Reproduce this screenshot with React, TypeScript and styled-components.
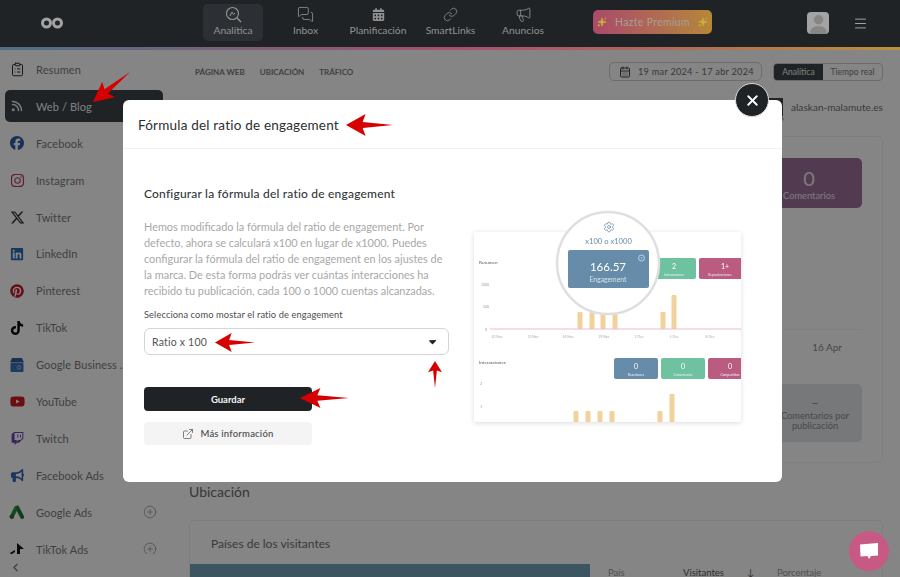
import React from "react";
import styled, { createGlobalStyle } from "styled-components";
import {
  CalendarDays,
  ChevronLeft,
  CirclePlus,
  ClipboardList,
  ExternalLink,
  Link as LinkIcon,
  Megaphone,
  Menu,
  MessagesSquare,
  Settings,
  Sparkles,
  X,
} from "lucide-react";
import {
  FaBullhorn,
  FaCalendarDays,
  FaCaretDown,
  FaFacebook,
  FaInstagram,
  FaLinkedin,
  FaPinterest,
  FaRss,
  FaTiktok,
  FaTwitch,
  FaUser,
  FaXTwitter,
  FaYoutube,
} from "react-icons/fa6";

const Global = createGlobalStyle`
  html, body { margin: 0; padding: 0; height: 100%; background: #fff; overflow: hidden; }
  * { box-sizing: border-box; }
  body { font-family: "Lato", "Noto Sans", sans-serif; color: #333; }
`;

const Page = styled.div`
  width: 900px;
  height: 577px;
  display: flex;
  flex-direction: column;
  overflow: hidden;
`;

const Header = styled.header`
  position: relative;
  z-index: 3;
  flex: 0 0 50px;
  display: flex;
  background: #1f2326;
  border-bottom: 3px solid;
  border-image: linear-gradient(90deg, #4c7086 0%, #a5506f 50%, #b06a5a 75%, #b8923c 100%) 1;
`;

const LogoBox = styled.div`
  width: 203px;
  padding: 13px 0 0 40px;
  color: #a3a3a3;
`;

const Nav = styled.nav`
  display: flex;
  gap: 12.5px;
  padding-top: 4px;
`;

const NavItem = styled.div<{ $active?: boolean }>`
  width: 60px;
  height: 37px;
  border-radius: 5px;
  background: ${(p) => (p.$active ? "#2c3034" : "transparent")};
  display: flex;
  flex-direction: column;
  align-items: center;
  padding-top: 2px;
  color: #929292;
  font-size: 10.3px;
  line-height: 14px;
  white-space: nowrap;
`;

const NavIcon = styled.span`
  height: 17px;
  display: flex;
  align-items: center;
`;

const Premium = styled.div`
  margin: 10px 0 0 40px;
  width: 119px;
  height: 24px;
  border-radius: 5px;
  background: linear-gradient(90deg, #aa4a6b, #b5873a);
  color: #a79c95;
  font-size: 10.5px;
  font-weight: 500;
  letter-spacing: 0.3px;
  white-space: nowrap;
  display: flex;
  align-items: center;
  justify-content: center;
  gap: 8px;
`;

const Spark = styled.span`
  color: #cdb03a;
  display: flex;
`;

const Avatar = styled.div`
  margin: 12px 0 0 95px;
  width: 22px;
  height: 22px;
  border-radius: 4px;
  background: #a3a3a3;
  color: #868686;
  overflow: hidden;
  display: flex;
  justify-content: center;
  align-items: flex-end;
`;

const Burger = styled.div`
  margin: 15px 0 0 24px;
  color: #a0a0a0;
`;

const Body = styled.div`
  flex: 1;
  display: flex;
  min-height: 0;
`;

const Sidebar = styled.aside`
  flex: 0 0 170px;
  display: flex;
  flex-direction: column;
`;

const SideList = styled.div`
  flex: 1;
  min-height: 0;
  overflow: hidden;
  padding-top: 3.5px;
`;

const SideRow = styled.div<{ $active?: boolean }>`
  position: relative;
  height: 32px;
  width: 158px;
  margin: 0 0 4.9px 5px;
  padding-left: 4px;
  border-radius: 5px;
  display: flex;
  align-items: center;
  gap: 11px;
  font-size: 11px;
  letter-spacing: 0.1px;
  color: ${(p) => (p.$active ? "#f2f2f2" : "#7b7b7b")};
  background: ${(p) => (p.$active ? "#3d4449" : "transparent")};
  white-space: nowrap;
`;

const SideIcon = styled.span<{ $color?: string }>`
  width: 16px;
  display: flex;
  justify-content: center;
  color: ${(p) => p.$color || "inherit"};
`;

const SidePlus = styled.span`
  position: absolute;
  right: 6px;
  top: 9px;
  color: #8d8d8d;
  display: flex;
`;

const SideFoot = styled.div`
  flex: 0 0 22px;
  padding: 4px 0 0 9px;
  color: #707070;
`;

const Main = styled.main`
  flex: 1;
  min-width: 0;
  overflow: hidden;
  padding: 12px 17px 0 5px;
`;

const TopBar = styled.div`
  display: flex;
  align-items: center;
  height: 19px;
`;

const Tabs = styled.div`
  display: flex;
  gap: 15px;
  padding-left: 20px;
  flex: 1;
  font-size: 8px;
  font-weight: 700;
  color: #7c7c7c;
  white-space: nowrap;
`;

const DateBox = styled.div`
  width: 153px;
  height: 19px;
  margin-right: 11px;
  border: 1px solid #d0d0d0;
  border-radius: 5px;
  display: flex;
  align-items: center;
  gap: 7px;
  padding-left: 9px;
  font-size: 9.2px;
  letter-spacing: 0.25px;
  white-space: nowrap;
  color: #6c6c6c;
`;

const Toggle = styled.div`
  width: 110px;
  height: 18px;
  border: 1px solid #d0d0d0;
  border-radius: 4px;
  overflow: hidden;
  display: flex;
  font-size: 8.5px;
  color: #7a7a7a;
`;

const ToggleItem = styled.span<{ $on?: boolean }>`
  flex: ${(p) => (p.$on ? "0 0 49px" : "1")};
  display: flex;
  align-items: center;
  justify-content: center;
  background: ${(p) => (p.$on ? "#3d4449" : "transparent")};
  color: ${(p) => (p.$on ? "#f0f0f0" : "#7a7a7a")};
`;

const SiteRow = styled.div`
  margin-top: 17px;
  height: 18px;
  display: flex;
  justify-content: flex-end;
  align-items: center;
  gap: 8px;
  font-size: 10px;
  letter-spacing: 0.05px;
  color: #6f6f6f;
`;

const Favicon = styled.span`
  position: relative;
  width: 19px;
  height: 18px;
  background: #444;
`;

const FavBadge = styled.span`
  position: absolute;
  right: -1px;
  bottom: -5px;
  color: #3f8a86;
  font-size: 7px;
  display: flex;
`;

const Card = styled.section`
  margin: 20px 0 0 14px;
  border: 1px solid #f1f1f1;
  border-radius: 6px;
  padding: 21px 20px 20px;
`;

const Tile = styled.div<{ $bg: string; $fg: string; $h: number; $w: number }>`
  width: ${(p) => p.$w}px;
  height: ${(p) => p.$h}px;
  margin-left: auto;
  border-radius: 5px;
  background: ${(p) => p.$bg};
  color: ${(p) => p.$fg};
  display: flex;
  flex-direction: column;
  align-items: center;
  justify-content: center;
  text-align: center;
  font-size: 9.3px;
  line-height: 10px;
`;

const TileValue = styled.div<{ $size: number }>`
  font-size: ${(p) => p.$size}px;
  line-height: 1.25;
`;

const ChartStub = styled.div`
  height: 122px;
  border-bottom: 1px solid #f3f3f3;
`;

const AxisDate = styled.div`
  height: 54px;
  padding-top: 11px;
  text-align: right;
  padding-right: 20px;
  font-size: 10px;
  color: #8a8a8a;
`;

const Section = styled.h2`
  margin: 20px 0 0 14px;
  font-size: 14px;
  line-height: 18px;
  font-weight: 400;
  color: #6b6b6b;
`;

const Card2 = styled.section`
  margin: 19px 0 0 14px;
  border: 1px solid #f1f1f1;
  border-radius: 6px;
  height: 100px;
`;

const Card2Title = styled.div`
  padding: 15px 0 0 21px;
  height: 43px;
  font-size: 12px;
  color: #6f6f6f;
`;

const Card2Row = styled.div`
  display: flex;
`;

const MapBlock = styled.div`
  width: 400px;
  height: 60px;
  background: #73a3b9;
`;

const TableHead = styled.div`
  display: flex;
  padding: 3px 0 0 18px;
  font-size: 9.5px;
  line-height: 12px;
`;

const HeadCell = styled.span<{ $w: number; $dark?: boolean }>`
  width: ${(p) => p.$w}px;
  color: ${(p) => (p.$dark ? "#606060" : "#9a9a9a")};
`;

const Overlay = styled.div`
  position: fixed;
  inset: 0;
  z-index: 2;
  background: rgba(0, 0, 0, 0.48);
  padding: 100px 118px 0 123px;
`;

const Modal = styled.div`
  position: relative;
  width: 659px;
  height: 382px;
  background: #fff;
  border-radius: 6px;
`;

const ModalHead = styled.div`
  height: 49px;
  border-bottom: 1px solid #eef1f1;
  padding: 16px 0 0 15px;
  font-size: 13.5px;
  line-height: 18px;
  letter-spacing: 0.2px;
  color: #2b2f32;
`;

const Close = styled.div`
  position: absolute;
  top: -17px;
  right: 13px;
  width: 34px;
  height: 34px;
  border-radius: 50%;
  background: #1f2326;
  border: 1px solid #d9d9d9;
  color: #fff;
  display: flex;
  align-items: center;
  justify-content: center;
`;

const ModalBody = styled.div`
  display: flex;
  padding-left: 21px;
  gap: 16px;
`;

const FormCol = styled.div`
  width: 305px;
  padding-top: 36px;
`;

const FormTitle = styled.h3`
  margin: 0;
  font-size: 12px;
  line-height: 18px;
  font-weight: 500;
  letter-spacing: 0.2px;
  color: #33373a;
`;

const Lead = styled.p`
  margin: 16px 0 0;
  font-size: 10.9px;
  line-height: 16px;
  white-space: nowrap;
  color: #a8a8a8;
`;

const FieldLabel = styled.div`
  margin-top: 9px;
  font-size: 9.3px;
  line-height: 14px;
  letter-spacing: 0.1px;
  color: #4d4d4d;
`;

const Select = styled.div`
  margin-top: 6px;
  height: 27px;
  border: 1px solid #d5d5d5;
  border-radius: 6px;
  padding: 0 10px 0 7px;
  display: flex;
  align-items: center;
  justify-content: space-between;
  font-size: 10.5px;
  letter-spacing: 0.2px;
  color: #555;
`;

const Guardar = styled.button`
  display: block;
  margin-top: 32px;
  width: 168px;
  height: 24px;
  border: 0;
  border-radius: 4px;
  background: #1f2326;
  color: #f4f4f4;
  font: 700 9.5px "Lato", sans-serif;
`;

const MoreInfo = styled.button`
  margin-top: 11px;
  width: 168px;
  height: 23px;
  border: 0;
  border-radius: 4px;
  background: #f4f4f4;
  color: #555;
  font: 600 9.5px "Lato", sans-serif;
  letter-spacing: 0.2px;
  display: flex;
  align-items: center;
  justify-content: center;
  gap: 6px;
`;

const PreviewCol = styled.div`
  padding-top: 56px;
`;

const PreviewSvg = styled.svg`
  display: block;
  font-family: "Lato", sans-serif;
  filter: blur(0.3px);
`;

const Chat = styled.div`
  position: fixed;
  z-index: 3;
  left: 849px;
  top: 531px;
  width: 40px;
  height: 40px;
  border-radius: 50%;
  background: #c75a85;
  display: flex;
  align-items: center;
  justify-content: center;
`;

const Pointer = styled.svg<{ $x: number; $y: number; $rot: number; $len: number; $h: number }>`
  position: fixed;
  z-index: 4;
  left: ${(p) => p.$x}px;
  top: ${(p) => p.$y - p.$h / 2}px;
  width: ${(p) => p.$len}px;
  height: ${(p) => p.$h}px;
  transform: rotate(${(p) => p.$rot}deg);
  transform-origin: 0 50%;
`;

const RedArrow = (p: { x: number; y: number; rot: number; len: number; h: number }) => (
  <Pointer $x={p.x} $y={p.y} $rot={p.rot} $len={p.len} $h={p.h} viewBox="0 0 48 22" preserveAspectRatio="none">
    <polygon points="0,11 20,0 17,8 48,11 17,14 20,22" fill="#d60000" />
  </Pointer>
);

const GoogleBusinessIcon = () => (
  <svg width="14" height="14" viewBox="0 0 14 14">
    <path d="M2 0h10l2 4.500H0z" fill="#2f5f9e" />
    <rect x="0.5" y="5" width="13" height="9" rx="1" fill="#3a74bd" />
    <circle cx="9" cy="9.5" r="1.7" fill="none" stroke="#a9c1df" strokeWidth="0.9" />
  </svg>
);

const GoogleAdsIcon = () => (
  <svg width="16" height="14" viewBox="0 0 16 14">
    <path d="M5.600 1.600 9.200.2 15 11.200a2 2 0 0 1-3.400 2z" fill="#1f7a3a" />
    <path d="M5.600 1.600 8 5.600l-3.800 7.600A2 2 0 0 1 1 11z" fill="#2a8a45" />
    <circle cx="2.800" cy="11.600" r="2.200" fill="#1e6f35" />
  </svg>
);

const TikTokAdsIcon = () => (
  <svg width="15" height="14" viewBox="0 0 15 14">
    <path d="M7 1 14 7H10v6H7z" fill="#111" />
    <path d="M0 11 5 8v2L1 12.500z" fill="#111" />
  </svg>
);

const AnaliticaIcon = () => (
  <svg width="17" height="17" viewBox="0 0 17 17" fill="none" stroke="currentColor" strokeWidth="1.1">
    <circle cx="7.5" cy="7.5" r="6" />
    <path d="M12 12l4 4" strokeWidth="1.5" />
    <path d="M5 10l2-4 1.500 2.500L10 7" strokeWidth="1" />
  </svg>
);

const LogoIcon = () => (
  <svg width="24" height="12" viewBox="0 0 24 12" fill="none" stroke="currentColor" strokeWidth="3">
    <circle cx="6.500" cy="6" r="4" />
    <circle cx="17.500" cy="6" r="4" />
  </svg>
);

const navItems = [
  { label: "Analítica", icon: <AnaliticaIcon />, active: true },
  { label: "Inbox", icon: <MessagesSquare size={17} strokeWidth={1.2} /> },
  { label: "Planificación", icon: <FaCalendarDays size={13} /> },
  { label: "SmartLinks", icon: <LinkIcon size={15} strokeWidth={1.3} /> },
  { label: "Anuncios", icon: <Megaphone size={17} strokeWidth={1.2} /> },
];

const sideItems: {
  label: string;
  icon: React.ReactNode;
  color?: string;
  active?: boolean;
  plus?: boolean;
}[] = [
  { label: "Resumen", icon: <ClipboardList size={15} strokeWidth={1.6} />, color: "#2e2e2e" },
  { label: "Web / Blog", icon: <FaRss size={12} />, color: "#e8e8e8", active: true },
  { label: "Facebook", icon: <FaFacebook size={14} />, color: "#2f5fa8" },
  { label: "Instagram", icon: <FaInstagram size={15} />, color: "#b23a63" },
  { label: "Twitter", icon: <FaXTwitter size={15} />, color: "#333" },
  { label: "LinkedIn", icon: <FaLinkedin size={14} />, color: "#2f6db4" },
  { label: "Pinterest", icon: <FaPinterest size={14} />, color: "#c1182d" },
  { label: "TikTok", icon: <FaTiktok size={14} />, color: "#050505" },
  { label: "Google Business ...", icon: <GoogleBusinessIcon /> },
  { label: "YouTube", icon: <FaYoutube size={15} />, color: "#d01a20" },
  { label: "Twitch", icon: <FaTwitch size={13} />, color: "#6b45b5" },
  { label: "Facebook Ads", icon: <FaBullhorn size={13} />, color: "#3a66b8", plus: true },
  { label: "Google Ads", icon: <GoogleAdsIcon />, plus: true },
  { label: "TikTok Ads", icon: <TikTokAdsIcon />, plus: true },
];

const summaryBars = [
  [580, 312],
  [592, 312],
  [603, 312],
  [615, 312],
  [663, 312],
  [674, 295],
];
const interactionBars = [
  [576, 411],
  [588, 411],
  [600, 411],
  [612, 411],
  [660, 411],
  [672, 394],
];
const axisDates = [
  [497, "20 Nov"],
  [533, "23 Nov"],
  [568, "26 Nov"],
  [604, "29 Nov"],
  [639, "2 Dec"],
  [674, "5 Dec"],
  [710, "8 Dec"],
] as const;
const miniTiles = [
  [614, "#668ca9", "Reacciones"],
  [661, "#6fc2a0", "Comentarios"],
  [708, "#b95c80", "Compartidos"],
] as const;

const EngagementPreview = () => (
  <PreviewSvg width="290" height="230" viewBox="465 205 290 230">
    <defs>
      <clipPath id="previewClip">
        <rect x="474" y="232" width="267" height="190" />
      </clipPath>
      <filter id="soft" x="-10%" y="-10%" width="120%" height="120%">
        <feDropShadow dx="0" dy="1" stdDeviation="2.5" floodColor="#000" floodOpacity="0.14" />
      </filter>
    </defs>
    <rect x="474" y="232" width="267" height="190" rx="2" fill="#fff" filter="url(#soft)" />
    <g clipPath="url(#previewClip)">
      <text x="479" y="264" fontSize="4.6" fill="#555">Resumen</text>
      <text x="481" y="286" fontSize="3.4" fill="#999">1000</text>
      <text x="483" y="308" fontSize="3.4" fill="#999">500</text>
      <text x="485" y="331" fontSize="3.4" fill="#999">0</text>
      {summaryBars.map(([x, y]) => (
        <rect key={x} x={x - 2.5} y={y} width="5" height={329 - y} rx="1" fill="#f1d29d" />
      ))}
      <rect x="490" y="328.5" width="251" height="1" fill="#eebccb" />
      {axisDates.map(([x, label]) => (
        <text key={x} x={x} y="338" fontSize="3.4" fill="#aaa" textAnchor="middle">{label}</text>
      ))}
      <rect x="640" y="258" width="56" height="21" rx="2" fill="#6fc2a0" />
      <text x="674" y="269" fontSize="7" fill="#fff" textAnchor="middle">2</text>
      <text x="674" y="275.5" fontSize="3.4" fill="#e8f6f0" textAnchor="middle">Interacciones</text>
      <rect x="699" y="258" width="50" height="21" rx="2" fill="#b95c80" />
      <text x="725" y="269" fontSize="7" fill="#fff" textAnchor="middle">1+</text>
      <text x="720" y="275.5" fontSize="3.4" fill="#f6e4eb" textAnchor="middle">Reproducciones</text>
      <text x="479" y="364" fontSize="4.6" fill="#555">Interacciones</text>
      {miniTiles.map(([x, fill, label]) => (
        <g key={x}>
          <rect x={x} y="358" width="44" height="21" rx="2" fill={fill} />
          <text x={x + 22} y="369" fontSize="7" fill="#fff" textAnchor="middle">0</text>
          <text x={x + 22} y="375.5" fontSize="3.4" fill="#eef" textAnchor="middle">{label}</text>
        </g>
      ))}
      <text x="480" y="385" fontSize="3.6" fill="#999">2</text>
      <text x="480" y="408" fontSize="3.6" fill="#999">1</text>
      {interactionBars.map(([x, y]) => (
        <rect key={x} x={x - 2.5} y={y} width="5" height={423 - y} rx="1" fill="#f1d29d" />
      ))}
    </g>
    <circle cx="608" cy="263" r="51" fill="#fff" stroke="#dfdfdf" strokeWidth="2.5" />
    <Settings x={603} y={221} width={12} height={12} color="#668ca9" strokeWidth={1.5} />
    <text x="608.5" y="244" fontSize="7.6" fill="#668ca9" textAnchor="middle">x100 o x1000</text>
    <rect x="568" y="250" width="81" height="38" rx="2" fill="#668ca9" />
    <text x="608" y="270.5" fontSize="11.5" fill="#fff" textAnchor="middle">166.57</text>
    <text x="608" y="282" fontSize="6.8" fill="#d7e3ec" textAnchor="middle">Engagement</text>
    <circle cx="641.5" cy="258" r="3" fill="none" stroke="#e4edf3" strokeWidth="0.7" />
    <text x="641.5" y="260" fontSize="4.5" fill="#e4edf3" textAnchor="middle">?</text>
  </PreviewSvg>
);

export default function App() {
  return (
    <Page>
      <Global />
      <Header>
        <LogoBox>
          <LogoIcon />
        </LogoBox>
        <Nav>
          {navItems.map((item) => (
            <NavItem key={item.label} $active={item.active}>
              <NavIcon>{item.icon}</NavIcon>
              {item.label}
            </NavItem>
          ))}
        </Nav>
        <Premium>
          <Spark>
            <Sparkles size={10} fill="currentColor" strokeWidth={1} />
          </Spark>
          Hazte Premium
          <Spark>
            <Sparkles size={10} fill="currentColor" strokeWidth={1} />
          </Spark>
        </Premium>
        <Avatar>
          <FaUser size={19} />
        </Avatar>
        <Burger>
          <Menu size={15} strokeWidth={1.6} />
        </Burger>
      </Header>
      <Body>
        <Sidebar>
          <SideList>
            {sideItems.map((item) => (
              <SideRow key={item.label} $active={item.active}>
                <SideIcon $color={item.color}>{item.icon}</SideIcon>
                {item.label}
                {item.plus && (
                  <SidePlus>
                    <CirclePlus size={14} strokeWidth={1.2} />
                  </SidePlus>
                )}
              </SideRow>
            ))}
          </SideList>
          <SideFoot>
            <ChevronLeft size={13} />
          </SideFoot>
        </Sidebar>
        <Main>
          <TopBar>
            <Tabs>
              <span>PÁGINA WEB</span>
              <span>UBICACIÓN</span>
              <span>TRÁFICO</span>
            </Tabs>
            <DateBox>
              <CalendarDays size={12} color="#444" />
              19 mar 2024 - 17 abr 2024
            </DateBox>
            <Toggle>
              <ToggleItem $on>Analítica</ToggleItem>
              <ToggleItem>Tiempo real</ToggleItem>
            </Toggle>
          </TopBar>
          <SiteRow>
            <Favicon>
              <FavBadge>
                <FaRss />
              </FavBadge>
            </Favicon>
            alaskan-malamute.es
          </SiteRow>
          <Card>
            <Tile $bg="#9e709a" $fg="#f4e8f2" $h={50} $w={106}>
              <TileValue $size={20}>0</TileValue>
              Comentarios
            </Tile>
            <ChartStub />
            <AxisDate>16 Apr</AxisDate>
            <Tile $bg="#e3e6ea" $fg="#8c8c8c" $h={58} $w={94}>
              <TileValue $size={13}>–</TileValue>
              Comentarios por publicación
            </Tile>
          </Card>
          <Section>Ubicación</Section>
          <Card2>
            <Card2Title>Países de los visitantes</Card2Title>
            <Card2Row>
              <MapBlock />
              <TableHead>
                <HeadCell $w={75}>País</HeadCell>
                <HeadCell $w={64} $dark>Visitantes</HeadCell>
                <HeadCell $w={30} $dark>↓</HeadCell>
                <HeadCell $w={60}>Porcentaje</HeadCell>
              </TableHead>
            </Card2Row>
          </Card2>
        </Main>
      </Body>
      <Overlay>
        <Modal>
          <ModalHead>Fórmula del ratio de engagement</ModalHead>
          <Close>
            <X size={17} strokeWidth={2.6} />
          </Close>
          <ModalBody>
            <FormCol>
              <FormTitle>Configurar la fórmula del ratio de engagement</FormTitle>
              <Lead>
                Hemos modificado la fórmula del ratio de engagement. Por
                <br />
                defecto, ahora se calculará x100 en lugar de x1000. Puedes
                <br />
                configurar la fórmula del ratio de engagement en los ajustes de
                <br />
                la marca. De esta forma podrás ver cuántas interacciones ha
                <br />
                recibido tu publicación, cada 100 o 1000 cuentas alcanzadas.
              </Lead>
              <FieldLabel>Selecciona como mostar el ratio de engagement</FieldLabel>
              <Select>
                Ratio x 100
                <FaCaretDown size={11} color="#222" />
              </Select>
              <Guardar>Guardar</Guardar>
              <MoreInfo>
                <ExternalLink size={12} strokeWidth={1.5} />
                Más información
              </MoreInfo>
            </FormCol>
            <PreviewCol>
              <EngagementPreview />
            </PreviewCol>
          </ModalBody>
        </Modal>
      </Overlay>
      <RedArrow x={93} y={102} rot={-39} len={48} h={20} />
      <RedArrow x={346} y={125} rot={0} len={47} h={22} />
      <RedArrow x={215} y={342} rot={0} len={40} h={19} />
      <RedArrow x={435} y={361} rot={90} len={27} h={14} />
      <RedArrow x={300} y={398} rot={0} len={49} h={20} />
      <Chat>
        <svg width="20" height="20" viewBox="0 0 20 20">
          <path d="M1 3.500 19 2v12.500l-7 .5-2 3-1.500-3L1.500 15.500z" fill="#fff" />
        </svg>
      </Chat>
    </Page>
  );
}
